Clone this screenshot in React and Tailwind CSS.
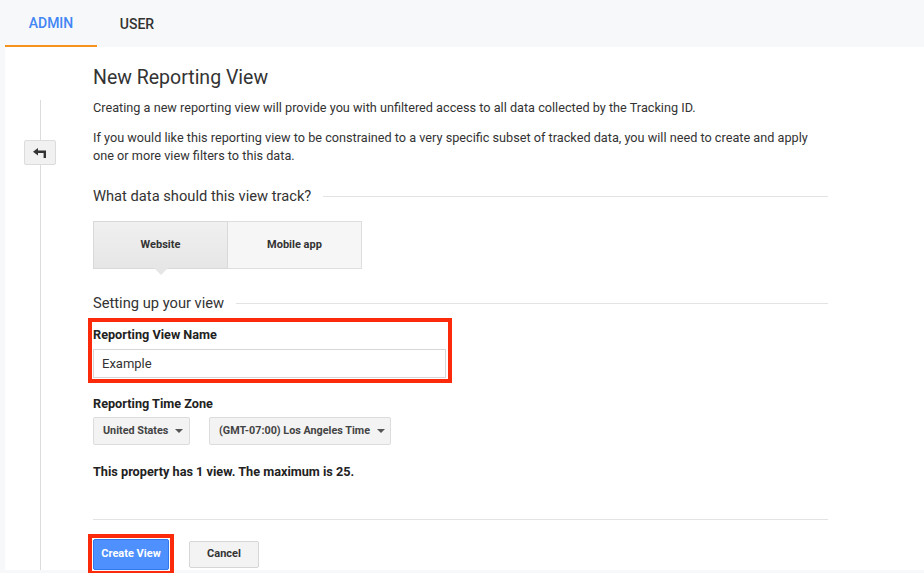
const SectionHeading = ({ children }) => (
  <div className="flex items-center gap-3">
    <span className="text-[14.7px] leading-[20px] text-[#333] whitespace-nowrap">{children}</span>
    <div className="flex-1 h-px bg-[#e3e3e3]" />
  </div>
);

const Caret = () => (
  <svg width="8" height="4" viewBox="0 0 8 4" className="ml-[7px]">
    <path d="M0 0 L8 0 L4 4 Z" fill="#555" />
  </svg>
);

const App = () => {
  return (
    <div
      className="w-[924px] h-[573px] overflow-hidden bg-[#f7f8fa] text-[#333]"
      style={{ fontFamily: "Roboto, 'Liberation Sans', sans-serif" }}
    >
      {/* tabs */}
      <div className="h-[47px] flex items-stretch pl-[5px]">
        <div className="w-[92px] flex items-center justify-center border-b-2 border-[#f6921e] text-[14px] font-medium text-[#4285f4] pt-[2px]">
          ADMIN
        </div>
        <div className="w-[80px] flex items-center justify-center text-[14px] font-medium text-[#333] pt-[2px]">
          USER
        </div>
      </div>

      {/* panel */}
      <div className="ml-[5px] h-[523px] bg-white flex">
        <div className="w-[70px] flex flex-col items-center pt-[53px]">
          <div className="w-px h-[40px] bg-[#dcdcdc]" />
          <div className="w-[32px] h-[25px] bg-[#f1f1f1] border border-[#dcdcdc] rounded-[2px] flex items-center justify-center">
            <svg width="14" height="10" viewBox="0 0 14 10">
              <path d="M0 3.8 L5 0 L5 2.5 L13 2.5 L13 10 L10.6 10 L10.6 5.1 L5 5.1 L5 7.6 Z" fill="#333" />
            </svg>
          </div>
          <div className="w-px flex-1 bg-[#dcdcdc]" />
        </div>

        <div className="ml-[18px] w-[735px] pt-[18px]">
          <h1 className="text-[19.5px] leading-[25px] text-[#333]">New Reporting View</h1>
          <p className="mt-[9px] text-[12.7px] leading-[18px] text-[#333]">
            Creating a new reporting view will provide you with unfiltered access to all data collected by the Tracking ID.
          </p>
          <p className="mt-[12px] text-[12.7px] leading-[18px] text-[#333]">
            If you would like this reporting view to be constrained to a very specific subset of tracked data, you will need to create and apply one or more view filters to this data.
          </p>

          <div className="mt-[21px]">
            <SectionHeading>What data should this view track?</SectionHeading>
          </div>

          <div className="mt-[15px] flex">
            <div className="relative w-[135px] h-[48px] flex items-center justify-center bg-gradient-to-b from-[#f0f0f0] to-[#e6e6e6] border border-[#d9d9d9] text-[11px] font-bold text-[#333]">
              Website
              <div className="absolute left-1/2 -translate-x-1/2 -bottom-[7px] w-0 h-0 border-l-[7px] border-r-[7px] border-t-[7px] border-l-transparent border-r-transparent border-t-[#e6e6e6]" />
            </div>
            <div className="w-[134px] h-[48px] flex items-center justify-center bg-[#f6f6f6] border border-l-0 border-[#dedede] text-[11px] font-bold text-[#333]">
              Mobile app
            </div>
          </div>

          <div className="mt-[24px]">
            <SectionHeading>Setting up your view</SectionHeading>
          </div>

          <div className="mt-[5px] -ml-[5px] w-[364px] border-4 border-[#fa2a0a] pl-px pr-[2px] pt-[5px] pb-px">
            <div className="text-[12.7px] leading-[16px] font-bold text-[#222]">Reporting View Name</div>
            <div className="mt-[6px] h-[29px] border border-[#d6d6d6] flex items-center px-[8px] text-[13px] text-[#333]">
              Example
            </div>
          </div>

          <div className="mt-[13px] text-[12.7px] leading-[16px] font-bold text-[#222]">Reporting Time Zone</div>
          <div className="mt-[5px] flex gap-[19px]">
            <div className="w-[97px] h-[28px] bg-[#f3f3f3] border border-[#dcdcdc] rounded-[2px] flex items-center pl-[9px] text-[10.8px] font-bold text-[#444]">
              United States
              <Caret />
            </div>
            <div className="w-[182px] h-[28px] bg-[#f3f3f3] border border-[#dcdcdc] rounded-[2px] flex items-center pl-[9px] text-[10.8px] font-bold text-[#444]">
              (GMT-07:00) Los Angeles Time
              <Caret />
            </div>
          </div>

          <div className="mt-[19px] text-[12.7px] leading-[16px] font-bold text-[#222]">
            This property has 1 view. The maximum is 25.
          </div>

          <div className="mt-[39px] h-px bg-[#e3e3e3]" />

          <div className="mt-[14px] flex items-center gap-[15px]">
            <div className="-ml-[5px] border-4 border-[#fa2a0a] p-px">
              <div className="w-[76px] h-[31px] bg-[#4d90fe] border border-[#3079ed] rounded-[2px] flex items-center justify-center text-[11px] font-bold text-white">
                Create View
              </div>
            </div>
            <div className="w-[70px] h-[27px] bg-[#f3f3f3] border border-[#d6d6d6] rounded-[2px] flex items-center justify-center text-[11px] font-bold text-[#333]">
              Cancel
            </div>
          </div>
        </div>
      </div>
    </div>
  );
};

export default App;
